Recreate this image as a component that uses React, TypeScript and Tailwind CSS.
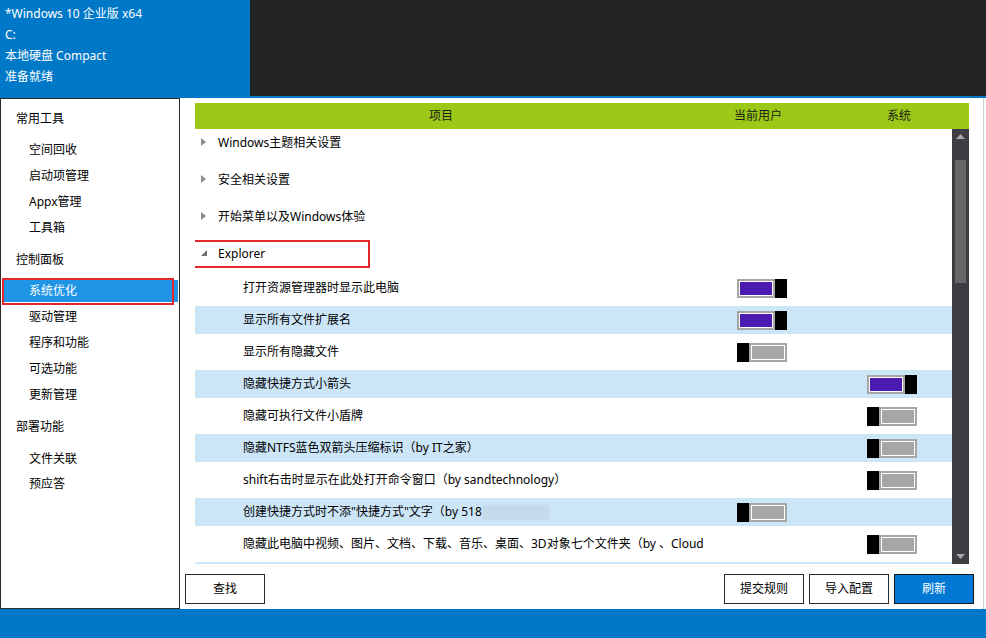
import React from 'react';

const FONT = "font-['Noto_Sans','Noto_Sans_CJK_SC',sans-serif]";

type Item = { text: string; user?: boolean; sys?: boolean; blur?: boolean };

const items: Item[] = [
  { text: '打开资源管理器时显示此电脑', user: true },
  { text: '显示所有文件扩展名', user: true },
  { text: '显示所有隐藏文件', user: false },
  { text: '隐藏快捷方式小箭头', sys: true },
  { text: '隐藏可执行文件小盾牌', sys: false },
  { text: '隐藏NTFS蓝色双箭头压缩标识（by IT之家）', sys: false },
  { text: 'shift右击时显示在此处打开命令窗口（by sandtechnology）', sys: false },
  { text: '创建快捷方式时不添"快捷方式"文字（by 518', user: false, blur: true },
  { text: '隐藏此电脑中视频、图片、文档、下载、音乐、桌面、3D对象七个文件夹（by 、Cloud）', sys: false },
  { text: '隐藏库', sys: false },
];

function Toggle({ on }: { on: boolean }) {
  const track = (
    <div className="flex-1 h-full border-2 border-[#a6a6a6]">
      <div className={`h-full border border-white ${on ? 'bg-[#4a1ab2]' : 'bg-[#a6a6a6]'}`} />
    </div>
  );
  const knob = <div className="w-[12px] h-full bg-black" />;
  return (
    <div className="flex w-[50px] h-[19px]">
      {on ? (
        <>
          {track}
          {knob}
        </>
      ) : (
        <>
          {knob}
          {track}
        </>
      )}
    </div>
  );
}

function Category({ label, open }: { label: string; open?: boolean }) {
  return (
    <div className="relative h-[26px] mb-[11px] flex items-center">
      <div className="w-[23px] pl-[6px] flex items-center">
        {open ? (
          <svg width="6" height="6" viewBox="0 0 6 6">
            <polygon points="6,0 6,6 0,6" fill="#707070" />
          </svg>
        ) : (
          <svg width="5" height="8" viewBox="0 0 5 8">
            <polygon points="0,0 5,4 0,8" fill="#8c8c8c" />
          </svg>
        )}
      </div>
      <span className="pt-[1px]">{label}</span>
      {open && <div className="absolute left-[-6px] top-0 w-[181px] h-[28px] border-2 border-[#e3262b]" />}
    </div>
  );
}

function SideHead({ label, className = '' }: { label: string; className?: string }) {
  return <div className={`h-[22px] flex items-center pl-[15px] ${className}`}>{label}</div>;
}

function SideItem({ label, className = '', active }: { label: string; className?: string; active?: boolean }) {
  return (
    <div
      className={`relative h-[22px] flex items-center ml-[2px] mr-[1px] pl-[26px] ${
        active ? 'bg-[#1f95e6] text-white' : ''
      } ${className}`}
    >
      {label}
      {active && <div className="absolute left-[-1px] top-[-2px] w-[172px] h-[27px] border-2 border-[#e3262b]" />}
    </div>
  );
}

export default function App() {
  return (
    <div className={`w-[986px] h-[638px] flex flex-col bg-white overflow-hidden text-[12px] text-black ${FONT}`}>
      {/* Title area */}
      <div className="h-[96px] flex shrink-0">
        <div className="w-[250px] bg-[#0078c8] text-white pl-[5px] pt-[3px] leading-[21px]">
          <div>*Windows 10 企业版 x64</div>
          <div>C:</div>
          <div>本地硬盘 Compact</div>
          <div>准备就绪</div>
        </div>
        <div className="flex-1 bg-[#232323]" />
      </div>
      <div className="h-[2px] bg-[#0078c8] shrink-0" />

      {/* Middle */}
      <div className="flex-1 flex min-h-0">
        {/* Sidebar */}
        <div className="w-[180px] border border-[#2b2b2b] pt-[9px] shrink-0">
          <SideHead label="常用工具" />
          <SideItem label="空间回收" className="mt-[9px]" />
          <SideItem label="启动项管理" className="mt-[4px]" />
          <SideItem label="Appx管理" className="mt-[4px]" />
          <SideItem label="工具箱" className="mt-[4px]" />
          <SideHead label="控制面板" className="mt-[10px]" />
          <SideItem label="系统优化" active className="mt-[9px]" />
          <SideItem label="驱动管理" className="mt-[4px]" />
          <SideItem label="程序和功能" className="mt-[4px]" />
          <SideItem label="可选功能" className="mt-[4px]" />
          <SideItem label="更新管理" className="mt-[4px]" />
          <SideHead label="部署功能" className="mt-[10px]" />
          <SideItem label="文件关联" className="mt-[10px]" />
          <SideItem label="预应答" className="mt-[3px]" />
        </div>

        {/* Main */}
        <div className="flex-1 flex">
          <div className="flex-1 flex flex-col pt-[5px] pb-[5px]">
            {/* Header */}
            <div className="ml-[15px] mr-[14px] h-[26px] bg-[#9cc817] grid grid-cols-[492px_142px_140px] items-center text-[#1a1a1a]">
              <div className="text-center">项目</div>
              <div className="text-center">当前用户</div>
              <div className="text-center">系统</div>
            </div>

            {/* List */}
            <div className="ml-[15px] mr-[14px] h-[435px] flex">
              <div className="flex-1 overflow-hidden">
                <Category label="Windows主题相关设置" />
                <Category label="安全相关设置" />
                <Category label="开始菜单以及Windows体验" />
                <Category label="Explorer" open />
                <div className="mt-[-3px]">
                  {items.map((it, i) => (
                    <div
                      key={i}
                      className={`h-[28px] mb-[4px] flex items-center ${i % 2 === 1 ? 'bg-[#cce6f8]' : ''}`}
                    >
                      <div className="w-[48px] shrink-0" />
                      <div className="w-[460px] shrink-0 overflow-hidden whitespace-nowrap flex items-center">
                        <span>{it.text}</span>
                        {it.blur && <div className="w-[67px] h-[15px] bg-[#c4d9e9] blur-[1px]" />}
                      </div>
                      <div className="w-[34px] shrink-0" />
                      <div className="w-[130px] shrink-0">{it.user !== undefined && <Toggle on={it.user} />}</div>
                      <div>{it.sys !== undefined && <Toggle on={it.sys} />}</div>
                    </div>
                  ))}
                </div>
              </div>
              {/* Scrollbar */}
              <div className="w-[17px] bg-[#3e3d42] flex flex-col items-center shrink-0">
                <svg width="9" height="5" viewBox="0 0 9 5" className="mt-[5px]">
                  <polygon points="0,5 4.5,0 9,5" fill="#a8a8a8" />
                </svg>
                <div className="w-[11px] h-[123px] bg-[#686868] mt-[21px]" />
                <div className="flex-1" />
                <svg width="9" height="5" viewBox="0 0 9 5" className="mb-[5px]">
                  <polygon points="0,0 9,0 4.5,5" fill="#a8a8a8" />
                </svg>
              </div>
            </div>

            {/* Buttons */}
            <div className="mt-[10px] h-[30px] flex pl-[5px] pr-[9px]">
              <button className="w-[80px] h-[30px] border border-[#2b2b2b] bg-white">查找</button>
              <div className="flex-1" />
              <div className="flex gap-[5px]">
                <button className="w-[80px] h-[30px] border border-[#2b2b2b] bg-white">提交规则</button>
                <button className="w-[80px] h-[30px] border border-[#2b2b2b] bg-white">导入配置</button>
                <button className="w-[80px] h-[30px] border border-[#1a1a1a] bg-[#0078d4] text-white">刷新</button>
              </div>
            </div>
          </div>
          <div className="w-px bg-[#c9ced2]" />
          <div className="w-[2px]" />
        </div>
      </div>

      {/* Bottom bar */}
      <div className="h-[29px] bg-[#0078c8] shrink-0" />
    </div>
  );
}
